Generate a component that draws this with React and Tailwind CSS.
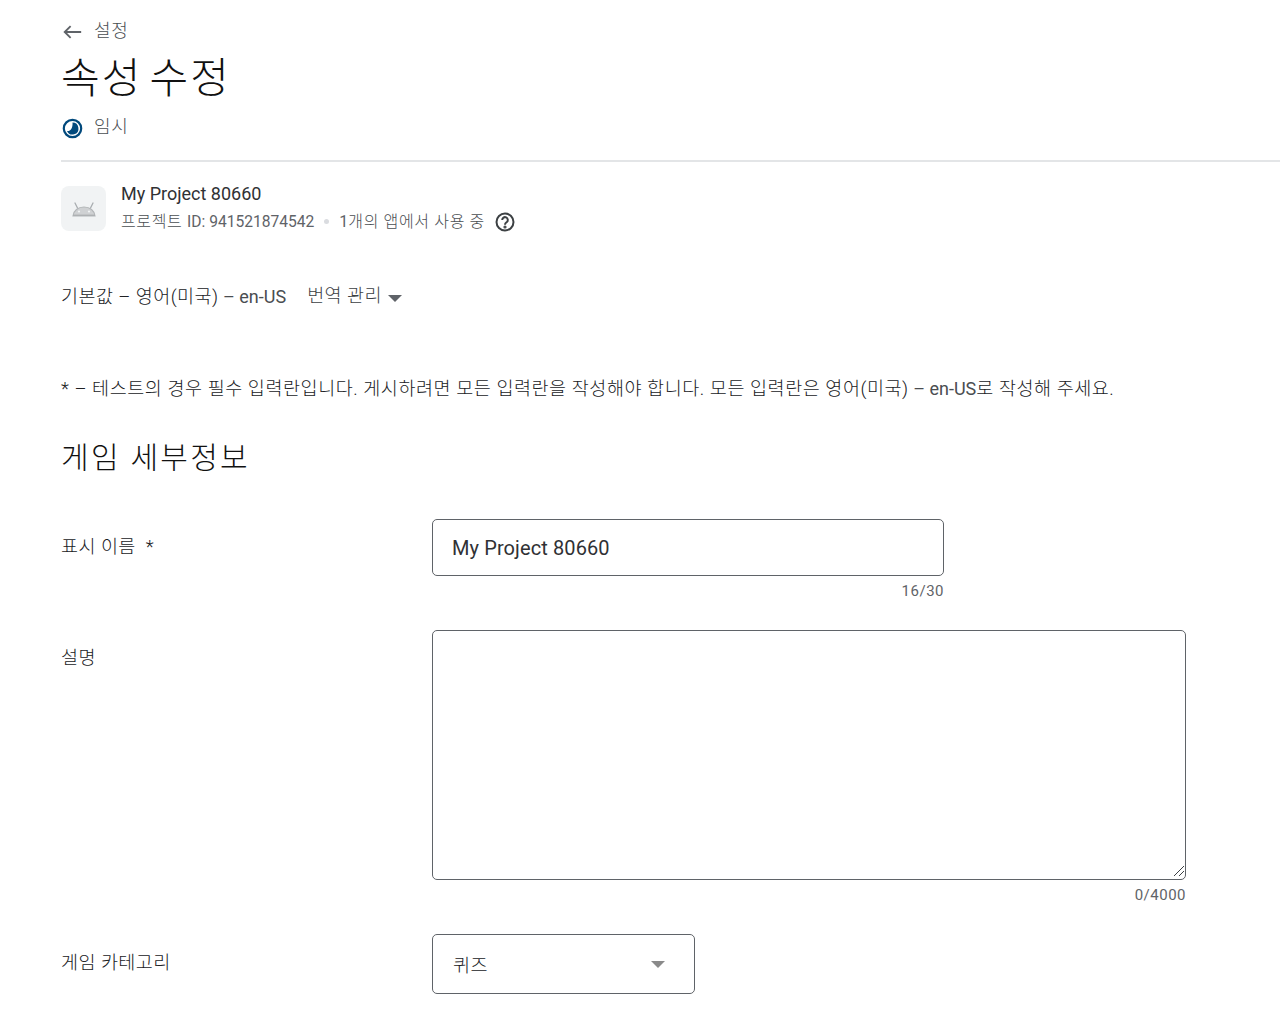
function Android() {
  return (
    <svg width="26" height="18" viewBox="0 0 26 18" fill="none">
      <path d="M2 16C2.5 10.5 7 7 13 7S23.5 10.5 24 16Z" fill="#cfd1d3" stroke="#b4b7b9" strokeWidth="1.2" />
      <path d="M2 14.6h22V16H2Z" fill="#aeb1b3" />
      <path d="M6.5 8 4 3M19.5 8 22 3" stroke="#a9adb0" strokeWidth="1.3" strokeLinecap="round" />
      <circle cx="8" cy="11.5" r="1.1" fill="#f1f3f4" />
      <circle cx="18" cy="11.5" r="1.1" fill="#f1f3f4" />
    </svg>
  );
}
function Caret({ cls }) {
  return <span className={`w-0 h-0 border-l-[7px] border-r-[7px] border-t-[7px] border-l-transparent border-r-transparent ${cls}`} />;
}
export default function App() {
  return (
    <div className="bg-white h-[1030px] overflow-hidden pl-[61px] text-[#202124] font-light font-['Roboto','Noto_Sans_CJK_KR',sans-serif]">
      <div className="h-[162px] border-b-2 border-[#e3e5e7] pt-[19px]">
        <div className="flex items-center h-6 text-[#4a4e52]">
          <svg width="22" height="22" viewBox="0 0 24 24" fill="none" className="mt-0.5" stroke="#5f6368" strokeWidth="2"><path d="M22 12H4M10.5 5.5 4 12l6.5 6.5" /></svg>
          <span className="ml-[11px] text-[18px] leading-6 tracking-[0.75px]">설정</span>
        </div>
        <h1 className="text-[42px] leading-[52px] mt-[10px] tracking-[2px] [word-spacing:-5px] font-light text-[#111]">속성 수정</h1>
        <div className="flex items-center h-6 mt-[10px] text-[#4a4e52]">
          <svg width="21" height="21" viewBox="0 0 21 21" className="mt-0.5 ml-px">
            <circle cx="10.5" cy="10.5" r="8.7" fill="none" stroke="#01497c" strokeWidth="2.2" />
            <path d="M10.5 4.5A6 6 0 1 1 5 13C8.5 13.5 11 10 10.5 4.5Z" fill="#01497c" />
          </svg>
          <span className="ml-[11px] text-[18px] leading-6 tracking-[0.75px]">임시</span>
        </div>
      </div>
      <div className="flex mt-[24px]">
        <div className="w-[45px] h-[45px] rounded-lg bg-[#f1f3f4] flex items-center justify-center"><Android /></div>
        <div className="ml-[15px]">
          <div className="text-[18px] leading-5 -mt-0.5 font-normal text-[#303134]">My Project 80660</div>
          <div className="flex items-center mt-[5px] text-[16px] leading-5 text-[#4a4e52] tracking-[0.65px]">
            <span>프로젝트 <span className="font-normal tracking-normal text-[15.6px] text-[#5f6368]">ID: 941521874542</span></span>
            <span className="w-[5px] h-[5px] rounded-full bg-[#dadce0] mx-[10px]" />
            <span><span className="font-normal tracking-normal text-[#5f6368]">1</span>개의 앱에서 사용 중</span>
            <svg width="24" height="24" viewBox="0 0 24 24" fill="none" className="ml-[8px] mt-[1px]" stroke="#3c4043" strokeWidth="2">
              <circle cx="12" cy="12" r="8.5" />
              <path d="M9.2 10a2.8 2.8 0 1 1 4.6 2.1c-1 .8-1.8 1.3-1.8 2.6" />
              <circle cx="12" cy="17" r=".6" fill="#3c4043" />
            </svg>
          </div>
        </div>
      </div>
      <div className="flex items-center mt-[51px] h-6 text-[18.5px] tracking-[0.45px]">
        <span className="text-[#202124]">기본값 – 영어(미국)<span className="font-normal tracking-normal text-[18px] text-[#4a4d51]"> – en-US</span></span>
        <span className="ml-[21px] text-[#3c4043]">번역 관리</span>
        <Caret cls="border-t-[#5f6368] ml-[6px] mt-[3px]" />
      </div>
      <p className="mt-[68px] text-[18.5px] leading-6 text-[#202124] whitespace-nowrap tracking-[0.55px]">* – 테스트의 경우 필수 입력란입니다. 게시하려면 모든 입력란을 작성해야 합니다. 모든 입력란은 영어(미국)<span className="font-normal tracking-normal text-[18px] text-[#4a4d51]"> – en-US</span>로 작성해 주세요.</p>
      <h2 className="text-[30px] leading-10 mt-[37px] tracking-[2.3px] font-light text-[#111]">게임 세부정보</h2>
      <div className="flex mt-[41px]">
        <div className="w-[371px] text-[18.5px] leading-6 pt-[16px] text-[#202124] tracking-[0.45px]">표시 이름 &nbsp;*</div>
        <div>
          <div className="w-[512px] h-[57px] border border-[#5f6368] rounded-[5px] flex items-center pl-[19px] text-[20px] font-normal tracking-[0.1px] text-[#303134]">My Project 80660</div>
          <div className="text-right text-[15px] leading-5 mt-[5px] text-[#5f6368] tracking-[0.5px] font-normal">16/30</div>
        </div>
      </div>
      <div className="flex mt-[29px]">
        <div className="w-[371px] text-[18.5px] leading-6 pt-[16px] text-[#202124] tracking-[0.45px]">설명</div>
        <div>
          <div className="relative w-[754px] h-[250px] border border-[#5f6368] rounded-[5px]">
            <svg width="12" height="12" viewBox="0 0 12 12" className="absolute right-0 bottom-0.5" stroke="#3c4043" fill="none"><path d="M1 11 11 1M6 11l5-5" /></svg>
          </div>
          <div className="text-right text-[15px] leading-5 mt-[5px] text-[#5f6368] tracking-[0.5px] font-normal">0/4000</div>
        </div>
      </div>
      <div className="flex mt-[29px]">
        <div className="w-[371px] text-[18.5px] leading-6 pt-[17px] text-[#202124] tracking-[0.45px]">게임 카테고리</div>
        <div className="w-[263px] h-[60px] border border-[#5f6368] rounded-[5px] flex items-center justify-between pl-5 pr-[29px] text-[18.5px] tracking-[0.45px]">
          <span className="mt-[6px]">퀴즈</span>
          <Caret cls="border-t-[#8a8a8a]" />
        </div>
      </div>
    </div>
  );
}
